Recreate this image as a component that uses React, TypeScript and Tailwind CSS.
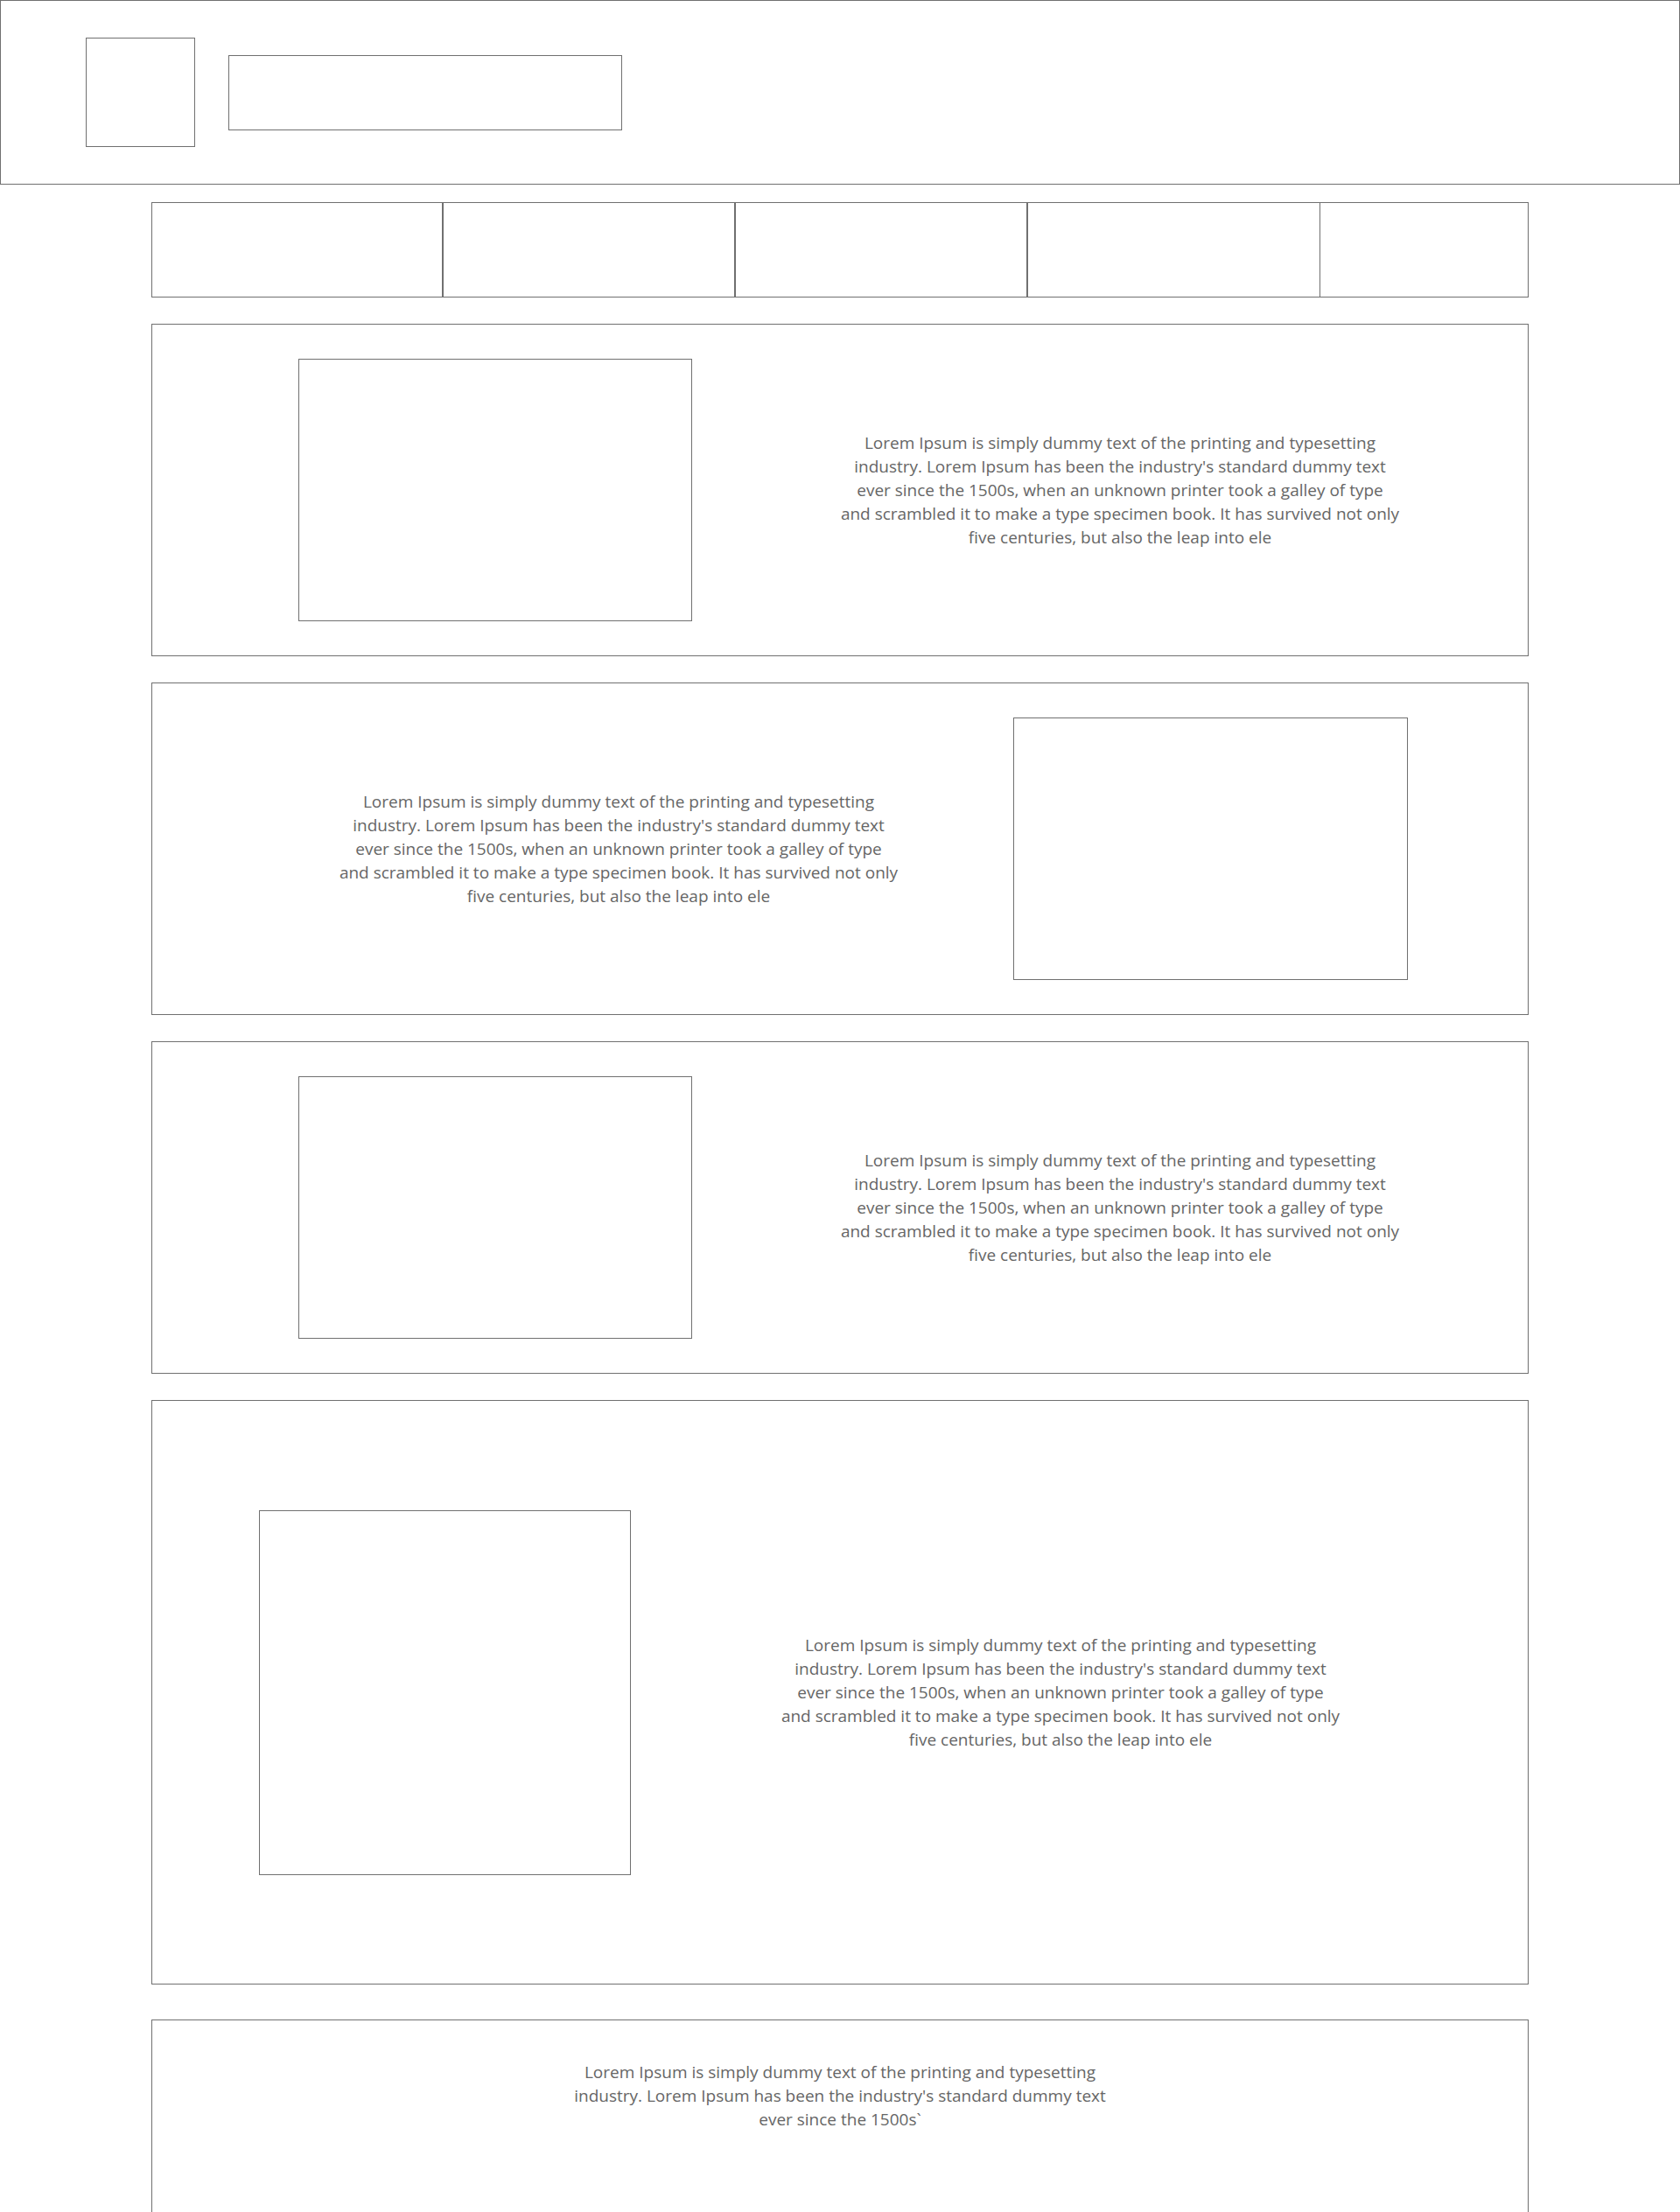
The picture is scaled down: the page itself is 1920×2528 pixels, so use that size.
import React from 'react';

const LOREM_LINES = [
  'Lorem Ipsum is simply dummy text of the printing and typesetting',
  "industry. Lorem Ipsum has been the industry's standard dummy text",
  'ever since the 1500s, when an unknown printer took a galley of type',
  'and scrambled it to make a type specimen book. It has survived not only',
  'five centuries, but also the leap into ele',
];

const SHORT_LINES = [
  'Lorem Ipsum is simply dummy text of the printing and typesetting',
  "industry. Lorem Ipsum has been the industry's standard dummy text",
  'ever since the 1500s`',
];

function Copy({ lines, className = '' }: { lines: string[]; className?: string }) {
  return (
    <p className={`text-center text-[19px] leading-[27px] text-[#666666] whitespace-nowrap ${className}`}>
      {lines.map((l, i) => (
        <React.Fragment key={i}>
          {l}
          {i < lines.length - 1 && <br />}
        </React.Fragment>
      ))}
    </p>
  );
}

export default function App() {
  return (
    <div
      className="min-h-screen bg-white pb-10"
      style={{ fontFamily: '"Segoe UI", "Open Sans", "Noto Sans", sans-serif' }}
    >
      {/* Header */}
      <header className="h-[211px] border border-[#707070] flex items-center pl-[97px]">
        <div className="w-[125px] h-[125px] border border-[#707070]" />
        <div className="ml-[38px] w-[450px] h-[86px] border border-[#707070]" />
      </header>

      <div className="w-[1574px] mx-auto">
        {/* Nav */}
        <nav className="mt-5 h-[109px] flex border border-[#707070]">
          <div className="w-[333px] border-r-2 border-[#707070]" />
          <div className="w-[334px] border-r-2 border-[#707070]" />
          <div className="w-[334px] border-r-2 border-[#707070]" />
          <div className="w-[334px] border-r border-[#707070]" />
          <div className="flex-1" />
        </nav>

        {/* Section 1 */}
        <section className="mt-[30px] h-[380px] border border-[#707070] flex items-center pl-[167px]">
          <div className="w-[450px] h-[300px] border border-[#707070] shrink-0" />
          <div className="ml-[159px] w-[660px] shrink-0">
            <Copy lines={LOREM_LINES} />
          </div>
        </section>

        {/* Section 2 */}
        <section className="mt-[30px] h-[380px] border border-[#707070] flex items-center pl-[203px]">
          <div className="w-[660px] shrink-0">
            <Copy lines={LOREM_LINES} />
          </div>
          <div className="ml-[121px] w-[451px] h-[300px] border border-[#707070] shrink-0" />
        </section>

        {/* Section 3 */}
        <section className="mt-[30px] h-[380px] border border-[#707070] flex items-center pl-[167px]">
          <div className="w-[450px] h-[300px] border border-[#707070] shrink-0" />
          <div className="ml-[159px] w-[660px] shrink-0">
            <Copy lines={LOREM_LINES} />
          </div>
        </section>

        {/* Section 4 */}
        <section className="mt-[30px] h-[668px] border border-[#707070] flex items-center pl-[122px]">
          <div className="w-[425px] h-[417px] border border-[#707070] shrink-0" />
          <div className="ml-[161px] w-[660px] shrink-0">
            <Copy lines={LOREM_LINES} />
          </div>
        </section>

        {/* Section 5 */}
        <section className="mt-10 h-[300px] border border-[#707070] pt-[46px]">
          <Copy lines={SHORT_LINES} />
        </section>
      </div>
    </div>
  );
}
